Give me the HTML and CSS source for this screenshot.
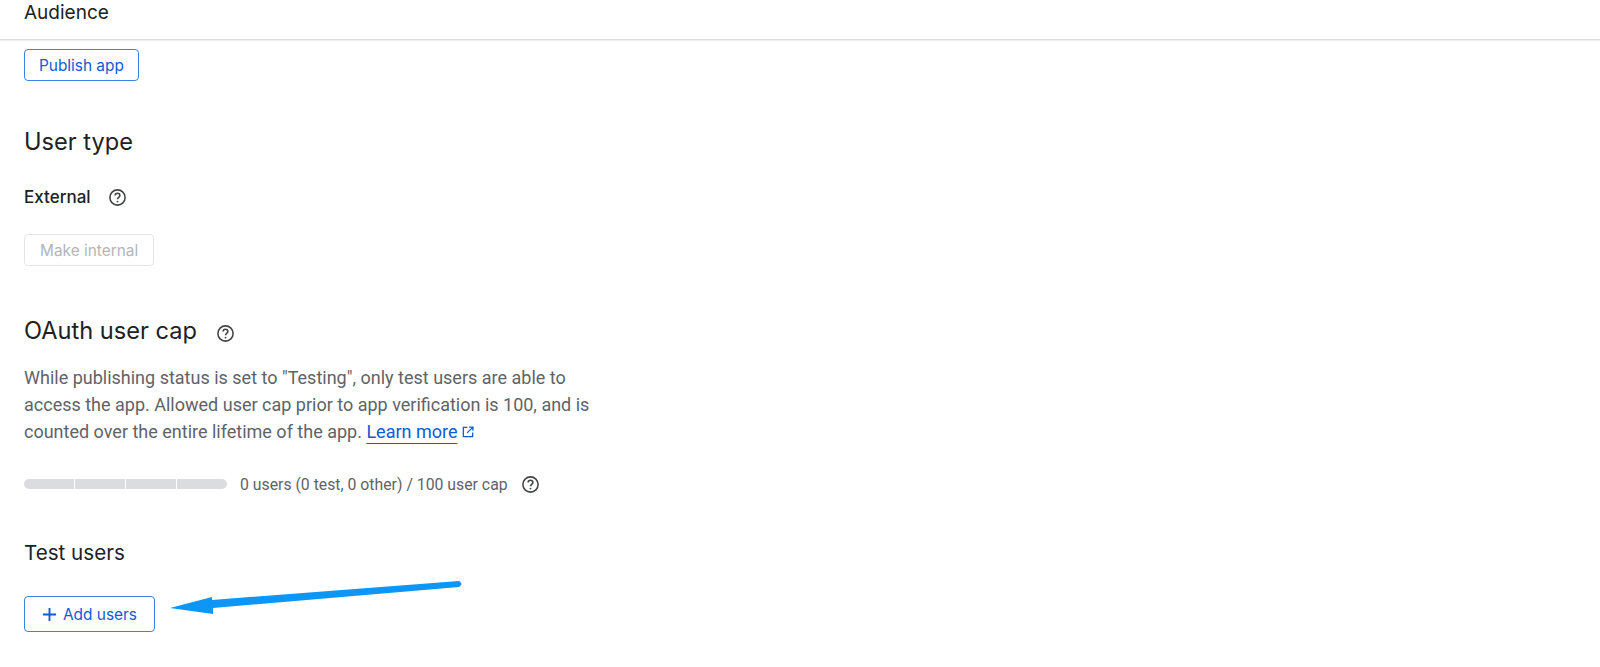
FILE: index.html
```html
<!DOCTYPE html>
<html lang="en">
<head>
  <meta charset="UTF-8">
  <title>Audience</title>
  <link rel="stylesheet" href="styles.css">
</head>
<body>

  <header class="page-header">
    <div class="page-title">Audience</div>
  </header>

  <main class="content">
    <button class="btn btn-publish">Publish app</button>

    <section class="user-type">
      <h2 class="heading">User type</h2>
      <div class="type-row">
        <span class="type-name">External</span>
        <svg class="help" viewBox="0 0 24 24"><circle cx="12" cy="12" r="9.6"/><path d="M9 9.6a3 3 0 0 1 6 0c0 2.1-3 2.4-3 4.6"/><circle class="dot" cx="12" cy="17.2" r="1.2"/></svg>
      </div>
      <button class="btn btn-disabled" disabled>Make internal</button>
    </section>

    <section class="user-cap">
      <div class="cap-title">
        <h2 class="heading">OAuth user cap</h2>
        <svg class="help" viewBox="0 0 24 24"><circle cx="12" cy="12" r="9.6"/><path d="M9 9.6a3 3 0 0 1 6 0c0 2.1-3 2.4-3 4.6"/><circle class="dot" cx="12" cy="17.2" r="1.2"/></svg>
      </div>
      <p class="description">While publishing status is set to "Testing", only test users are able to access the app. Allowed user cap prior to app verification is 100, and is counted over the entire lifetime of the app. <a class="learn-more" href="#">Learn more</a><svg class="external" viewBox="0 0 24 24"><path d="M11 4H4v16h16v-7M14 3.500h6.500V10M20 4l-9.500 9.500"/></svg></p>
      <div class="usage">
        <div class="usage-bar">
          <span></span><span></span><span></span><span></span>
        </div>
        <span class="usage-text">0 users (0 test, 0 other) / 100 user cap</span>
        <svg class="help" viewBox="0 0 24 24"><circle cx="12" cy="12" r="9.6"/><path d="M9 9.6a3 3 0 0 1 6 0c0 2.1-3 2.4-3 4.6"/><circle class="dot" cx="12" cy="17.2" r="1.2"/></svg>
      </div>
    </section>

    <section class="test-users">
      <h3 class="subheading">Test users</h3>
      <button class="btn btn-add">
        <svg class="plus" viewBox="0 0 16 16"><path d="M8 1v14M1 8h14"/></svg>
        Add users
      </button>
    </section>
  </main>

  <!-- annotation drawn on top of the screenshot -->
  <svg class="arrow" viewBox="0 0 300 45">
    <path class="arrow-shape" d="M2 33 L44 22 L44 25 L291 6 Q296 9 291 12 L45 33 L45 39 Z"/>
  </svg>

</body>
</html>
```

FILE: styles.css
```css
* {
  box-sizing: border-box;
  margin: 0;
  padding: 0;
}

body {
  position: relative;
  height: 667px;
  overflow: hidden;
  background-color: #fff;
  color: #202124;
  font-family: Roboto, Arial, sans-serif;
}

.page-header {
  height: 40px;
  padding: 1px 24px 0;
  border-bottom: 1px solid #dadce0;
  box-shadow: 0 1px 1px rgba(60, 64, 67, 0.08);
}

.page-title {
  font-family: Inter, Roboto, sans-serif;
  font-size: 19px;
  line-height: 24px;
}

.content {
  padding: 9px 24px 0;
}

.btn {
  display: flex;
  align-items: center;
  height: 32px;
  padding: 0 14px;
  background: #fff;
  border: 1px solid #3d7fe0;
  border-radius: 4px;
  color: #0b5cd8;
  font-family: Inter, Roboto, sans-serif;
  font-size: 15.400px;
  font-weight: 400;
}

.btn-disabled {
  padding: 0 15px;
  border-color: #e3e4e6;
  color: #b3b5b8;
}

.btn-add {
  height: 36px;
  padding: 0 17px;
  gap: 6px;
}

.heading {
  font-family: Inter, Roboto, sans-serif;
  font-size: 23.600px;
  font-weight: 400;
  line-height: 30px;
}

.subheading {
  font-family: Inter, Roboto, sans-serif;
  font-size: 20.600px;
  font-weight: 400;
  line-height: 28px;
}

.help {
  width: 19px;
  height: 19px;
  fill: none;
  stroke: #444746;
  stroke-width: 2;
}

.help .dot {
  fill: #444746;
  stroke: none;
}

.user-type {
  margin-top: 46px;
}

.type-row {
  display: flex;
  align-items: center;
  gap: 17px;
  margin-top: 30px;
  height: 20px;
}

.type-name {
  font-family: Inter, Roboto, sans-serif;
  font-size: 17px;
  font-weight: 500;
}

.user-type .btn-disabled {
  margin-top: 27px;
}

.user-cap {
  margin-top: 50px;
}

.cap-title {
  display: flex;
  align-items: center;
  gap: 19px;
}

.cap-title .help {
  margin-top: 4px;
}

.description {
  width: 575px;
  margin-top: 18px;
  color: #5f6368;
  font-size: 18px;
  line-height: 27px;
}

.learn-more {
  color: #0b5cd8;
  text-decoration: underline;
  text-decoration-thickness: 1px;
  text-underline-offset: 5px;
}

.external {
  width: 14px;
  height: 14px;
  margin-left: 4px;
  vertical-align: -1px;
  fill: none;
  stroke: #0b5cd8;
  stroke-width: 2.200;
}

.usage {
  display: flex;
  align-items: center;
  height: 20px;
  margin-top: 29px;
}

.usage-bar {
  display: flex;
  gap: 1.500px;
  width: 203px;
  height: 10px;
  border-radius: 5px;
  overflow: hidden;
}

.usage-bar span {
  flex: 1;
  background-color: #dadce0;
}

.usage-text {
  margin: 0 13px;
  color: #5f6368;
  font-size: 15.800px;
}

.test-users {
  margin-top: 45px;
}

.test-users .btn {
  margin-top: 29px;
}

.plus {
  width: 15px;
  height: 15px;
  fill: none;
  stroke: #0b5cd8;
  stroke-width: 2;
}

.arrow {
  position: absolute;
  left: 168px;
  top: 575px;
  width: 300px;
  height: 45px;
}

.arrow-shape {
  fill: #0d96f6;
}
```
